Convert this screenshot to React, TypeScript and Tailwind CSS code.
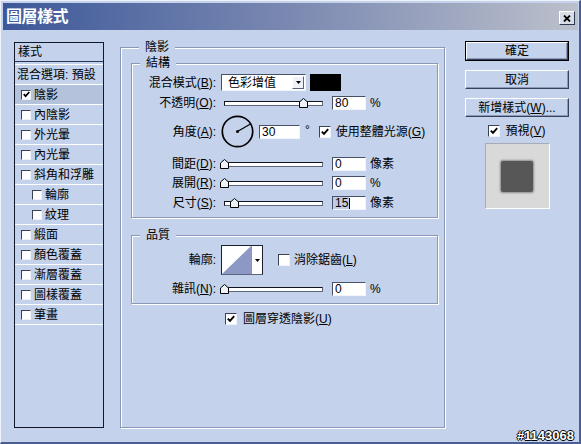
import React from 'react';

const font = "font-['Liberation_Sans','Noto_Sans_CJK_TC',sans-serif]";

type Kids = { children?: React.ReactNode };

function Mn({ children }: Kids) {
  return <span className="underline underline-offset-[1px]">{children}</span>;
}

function Check({ checked = false, small = false }: { checked?: boolean; small?: boolean }) {
  return (
    <span
      className={`${small ? 'w-[10px] h-[10px]' : 'w-[12px] h-[12px]'} shrink-0 flex items-center justify-center bg-white border border-t-[#3a4356] border-l-[#3a4356] border-r-[#eef2fa] border-b-[#eef2fa]`}
    >
      {checked && (
        <svg viewBox="0 0 8 8" className={small ? 'w-[7px] h-[7px]' : 'w-[8px] h-[8px]'}>
          <path d="M0.8 3.6 L3 5.9 L7.2 1.2" fill="none" stroke="#000" strokeWidth="1.9" />
        </svg>
      )}
    </span>
  );
}

function Field({ className = 'w-[34px]', children }: Kids & { className?: string }) {
  return (
    <div
      className={`${className} h-[14px] shrink-0 bg-white border border-t-[#46506a] border-l-[#46506a] border-r-[#f2f5fb] border-b-[#f2f5fb] flex items-center pl-[2px] text-[12px] leading-none`}
    >
      {children}
    </div>
  );
}

function Slider({ pct }: { pct: number }) {
  return (
    <div className="relative w-[104px] h-[10px] shrink-0 flex items-center">
      <div className="ml-[4px] w-[99px] h-[5px] bg-white border border-t-[#10141c] border-l-[#10141c] border-b-[#5c667c] border-r-[#5c667c]" />
      <svg
        className="absolute top-0"
        style={{ left: `${4 + pct * 0.99 - 4.5}px` }}
        width="9"
        height="10"
        viewBox="0 0 9 10"
      >
        <path d="M0.5 4 L4.5 0.5 L8.5 4 V9.5 H0.5 Z" fill="#eef1f7" stroke="#000" />
      </svg>
    </div>
  );
}

function Label({ children }: Kids) {
  return <div className="w-[85px] shrink-0 text-right pr-[1px] whitespace-nowrap">{children}</div>;
}

function SliderRow({ label, pct, value, unit, mt }: { label: React.ReactNode; pct: number; value: React.ReactNode; unit: string; mt: string }) {
  return (
    <div className={`${mt} h-[14px] flex items-center`}>
      <Label>{label}</Label>
      <div className="ml-[3px] flex items-center">
        <Slider pct={pct} />
        <div className="ml-[8px]">
          <Field>{value}</Field>
        </div>
        <span className="ml-[4px]">{unit}</span>
      </div>
    </div>
  );
}

function Group({ title, className, children }: Kids & { title: string; className: string }) {
  return (
    <fieldset
      className={`${className} border border-[#8a98b8] shadow-[inset_1px_1px_0_#fff,1px_1px_0_#fff]`}
    >
      <legend className="ml-[8px] px-[6px] bg-[#c4d2eb] leading-[16px] text-[12px]">{title}</legend>
      {children}
    </fieldset>
  );
}

function Btn({ children, primary = false, mt }: Kids & { primary?: boolean; mt: string }) {
  const face = (
    <div className="h-full flex items-center justify-center border border-t-white border-l-white border-r-[#37435e] border-b-[#37435e] shadow-[inset_-1px_-1px_0_#8c9aba] whitespace-nowrap">
      {children}
    </div>
  );
  return primary ? (
    <div className={`${mt} h-[20px] border border-black`}>{face}</div>
  ) : (
    <div className={`${mt} h-[19px]`}>{face}</div>
  );
}

const styles = [
  { label: '陰影', checked: true, selected: true },
  { label: '內陰影' },
  { label: '外光暈' },
  { label: '內光暈' },
  { label: '斜角和浮雕' },
  { label: '輪廓', indent: true },
  { label: '紋理', indent: true },
  { label: '緞面' },
  { label: '顏色覆蓋' },
  { label: '漸層覆蓋' },
  { label: '圖樣覆蓋' },
  { label: '筆畫' },
];

export default function App() {
  return (
    <div
      className={`${font} relative w-[581px] h-[444px] overflow-hidden bg-[#c4d2eb] border-t border-l border-t-[#eef3fb] border-l-[#eef3fb] border-r-2 border-b-2 border-r-[#4b5e93] border-b-[#4b5e93] text-black text-[12px] leading-none select-none`}
    >
      {/* title bar */}
      <div className="mt-[2px] ml-[2px] mr-[1px] h-[27px] bg-gradient-to-r from-[#3d5899] via-[#7b89b1] to-[#bcc0cb] flex items-center justify-between pl-[3px] pr-[3px]">
        <span className="text-white font-bold text-[16px] leading-none tracking-[-0.5px]">圖層樣式</span>
        <div className="mt-[3px] w-[16px] h-[14px] bg-[#d8dde8] border border-t-white border-l-white border-r-[#2e3850] border-b-[#2e3850] flex items-center justify-center">
          <svg width="8" height="7" viewBox="0 0 8 7">
            <path d="M1 0.5 L7 6.5 M7 0.5 L1 6.5" stroke="#000" strokeWidth="1.8" />
          </svg>
        </div>
      </div>

      <div className="flex items-start pt-[9px] pl-[13px]">
        {/* style list */}
        <div className="mt-[3px] w-[90px] h-[386px] border border-[#121828] flex flex-col">
          <div className="h-[19px] border-b border-[#2a3658] flex items-center pl-[3px]">樣式</div>
          <div className="h-[3px] border-b border-white" />
          <div className="h-[20px] border-b border-white flex items-center pl-[2px] whitespace-nowrap">混合選項: 預設</div>
          {styles.map((s) => (
            <div
              key={s.label}
              className={`h-[20px] border-b border-white flex items-center gap-[3px] ${s.indent ? 'pl-[17px]' : 'pl-[6px]'} ${s.selected ? 'bg-[#b5c2dc]' : ''}`}
            >
              <Check small checked={!!s.checked} />
              <span className="whitespace-nowrap">{s.label}</span>
            </div>
          ))}
        </div>

        {/* main panel */}
        <Group title="陰影" className="ml-[16px] w-[325px] h-[389px] pl-[10px] pr-[6px]">
          <Group title="結構" className="w-[307px] pb-[7px]">
            <div className="mt-[3px] h-[17px] flex items-center">
              <Label>
                混合模式(<Mn>B</Mn>):
              </Label>
              <div className="ml-[4px] w-[85px] h-[17px] bg-white border border-t-[#46506a] border-l-[#46506a] border-r-[#f2f5fb] border-b-[#f2f5fb] flex items-center">
                <span className="flex-1 pl-[6px]">色彩增值</span>
                <span className="w-[12px] h-[13px] mr-[1px] bg-[#eef1f7] border border-t-white border-l-white border-r-[#59647c] border-b-[#59647c] flex items-center justify-center">
                  <svg width="5" height="3" viewBox="0 0 5 3">
                    <path d="M0 0 H5 L2.5 3 Z" fill="#000" />
                  </svg>
                </span>
              </div>
              <div className="ml-[4px] w-[31px] h-[17px] bg-black" />
            </div>

            <SliderRow mt="mt-[5px]" label={<>不透明(<Mn>O</Mn>):</>} pct={80} value="80" unit="%" />

            <div className="mt-[5px] h-[33px] flex items-center">
              <Label>
                角度(<Mn>A</Mn>):
              </Label>
              <svg className="ml-[4px] shrink-0" width="33" height="33" viewBox="0 0 33 33">
                <circle cx="16.5" cy="16.5" r="15.2" fill="none" stroke="#000" strokeWidth="1.7" />
                <line x1="16.5" y1="16.5" x2="29" y2="9.3" stroke="#000" strokeWidth="1.2" />
                <circle cx="16.5" cy="16.5" r="1.5" fill="#000" />
              </svg>
              <div className="ml-[5px]">
                <Field className="w-[41px]">30</Field>
              </div>
              <span className="ml-[5px] -mt-[4px]">°</span>
              <div className="ml-[9px] flex items-center gap-[5px]">
                <Check checked />
                <span className="whitespace-nowrap">
                  使用整體光源(<Mn>G</Mn>)
                </span>
              </div>
            </div>

            <SliderRow mt="mt-[9px]" label={<>間距(<Mn>D</Mn>):</>} pct={0} value="0" unit="像素" />
            <SliderRow mt="mt-[5px]" label={<>展開(<Mn>R</Mn>):</>} pct={0} value="0" unit="%" />
            <SliderRow
              mt="mt-[6px]"
              label={<>尺寸(<Mn>S</Mn>):</>}
              pct={11}
              value={
                <span className="flex items-center h-full -ml-[2px]">
                  <span className="h-full flex items-center pl-[2px] pr-[1px] bg-[#c2cce2]">15</span>
                  <span className="w-[1px] h-[11px] bg-black" />
                </span>
              }
              unit="像素"
            />
          </Group>

          <Group title="品質" className="mt-[9px] w-[307px] pb-[7px]">
            <div className="mt-[2px] h-[30px] flex items-center">
              <Label>輪廓:</Label>
              <div className="ml-[4px] h-[30px] flex border border-t-[#1a2030] border-l-[#1a2030] border-r-[#1a2030] border-b-[#5c667c]">
                <svg width="29" height="28" viewBox="0 0 29 28" className="block">
                  <rect width="29" height="28" fill="#fff" />
                  <polygon points="29,0 29,28 0,28" fill="#8d99c4" />
                </svg>
                <div className="w-[11px] bg-white border-l border-[#8a96b4] flex items-center justify-center">
                  <svg width="5" height="3" viewBox="0 0 5 3">
                    <path d="M0 0 H5 L2.5 3 Z" fill="#000" />
                  </svg>
                </div>
              </div>
              <div className="ml-[15px] flex items-center gap-[4px]">
                <Check />
                <span className="whitespace-nowrap">
                  消除鋸齒(<Mn>L</Mn>)
                </span>
              </div>
            </div>
            <SliderRow mt="mt-[7px]" label={<>雜訊(<Mn>N</Mn>):</>} pct={0} value="0" unit="%" />
          </Group>

          <div className="mt-[9px] ml-[94px] h-[12px] flex items-center gap-[6px]">
            <Check checked />
            <span className="whitespace-nowrap">
              圖層穿透陰影(<Mn>U</Mn>)
            </span>
          </div>
        </Group>

        {/* buttons */}
        <div className="ml-[20px] w-[104px] flex flex-col">
          <Btn primary mt="mt-[2px]">確定</Btn>
          <Btn mt="mt-[9px]">取消</Btn>
          <Btn mt="mt-[9px]">
            新增樣式(<Mn>W</Mn>)...
          </Btn>
          <div className="mt-[8px] h-[12px] flex items-center justify-center gap-[5px]">
            <Check checked />
            <span>
              預視(<Mn>V</Mn>)
            </span>
          </div>
          <div className="mt-[6px] mx-auto w-[65px] h-[66px] bg-[#d9d9d9] border border-t-[#a7adb8] border-l-[#a7adb8] border-r-white border-b-white flex items-center justify-center">
            <div className="w-[32px] h-[31px] bg-[#575757] rounded-[2px] shadow-[0_0_2px_1px_rgba(87,87,87,0.6)]" />
          </div>
        </div>
      </div>

      <span className="absolute right-[5px] bottom-[0px] text-white font-bold text-[13px] leading-none [text-shadow:1px_0_0_#000,-1px_0_0_#000,0_1px_0_#000,0_-1px_0_#000]">
        #1143068
      </span>
    </div>
  );
}
